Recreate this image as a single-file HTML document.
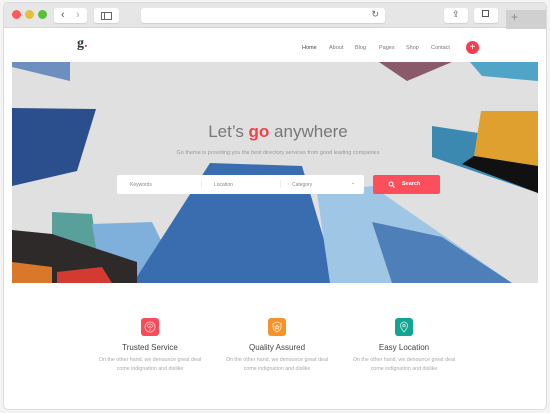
<!DOCTYPE html><html><head><style>
*{margin:0;padding:0;box-sizing:border-box}
body{width:550px;height:413px;background:#f3f3f3;font-family:"Liberation Sans",sans-serif;position:relative;overflow:hidden}
.win{position:absolute;left:3px;top:2px;width:544px;height:408px;background:#fff;border:1px solid #dcdcdc;border-radius:5px;overflow:hidden}
.bar{position:absolute;left:0;top:0;width:100%;height:25px;background:#e6e6e6;border-bottom:1px solid #d6d6d6}
.dot{position:absolute;top:7px;width:9px;height:9px;border-radius:50%}
.btn{position:absolute;top:5px;height:15px;background:#fff;border-radius:3px;box-shadow:0 1px 1px rgba(0,0,0,.1)}
.ab{position:absolute}
.nav span{position:absolute;top:42px;font-size:5.5px;color:#777}
.feat{position:absolute;top:315px;width:140px;text-align:center}
.ic{width:18px;height:18px;border-radius:3px;margin:0 auto;position:relative}
.ic svg{position:absolute;left:3px;top:3px}
.feat h4{font-weight:normal;font-size:8px;color:#444;margin-top:7px}
.feat p{font-size:5.3px;color:#aaa;line-height:8.5px;margin-top:4px}
</style></head><body>
<div class="win">
<div class="bar">
<div class="dot" style="left:8px;background:#fc5b57"></div>
<div class="dot" style="left:21px;background:#e5bf3c"></div>
<div class="dot" style="left:34px;background:#57c038"></div>
<div class="btn" style="left:50px;width:33px"><span class="ab" style="left:7px;top:1px;font-size:11px;color:#555">‹</span><span class="ab" style="left:22px;top:1px;font-size:11px;color:#aaa">›</span></div>
<div class="btn" style="left:90px;width:25px"><div class="ab" style="left:7px;top:4px;width:11px;height:8px;border:1px solid #666"></div><div class="ab" style="left:10px;top:4px;width:1px;height:8px;background:#666"></div></div>
<div class="btn" style="left:137px;width:244px"><span class="ab" style="right:6px;top:1px;font-size:9px;color:#666">↻</span></div>
<div class="btn" style="left:440px;width:24px"><span class="ab" style="left:8px;top:1px;font-size:9px;color:#555">⇪</span></div>
<div class="btn" style="left:470px;width:24px"><span class="ab" style="left:8px;top:2px;width:7px;height:7px;border:1px solid #555"></span></div>
<div class="ab" style="left:502px;top:7px;width:40px;height:19px;background:#d0d0d0;color:#888;font-size:12px;padding-left:5px">+</div>
</div>
<div class="ab" style="left:73px;top:33px;font-size:14px;font-weight:bold;color:#333;font-family:'Liberation Serif',serif">g<span style="color:#f0434c">.</span></div>
<div class="nav"><span style="left:298px;color:#444">Home</span><span style="left:325px">About</span><span style="left:351px">Blog</span><span style="left:375px">Pages</span><span style="left:402px">Shop</span><span style="left:427px">Contact</span></div>
<div class="ab" style="left:462px;top:38px;width:13px;height:13px;border-radius:50%;background:#fb3c4d;color:#fff;font-size:10px;text-align:center;line-height:13px">+</div>
<svg class="ab" style="left:8px;top:59px" width="526" height="221" viewBox="0 0 526 221">
<rect width="526" height="221" fill="#e0e0e0"/>
<polygon points="0,0 58,0 58,19 0,5" fill="#6d8fc0"/>
<polygon points="367,0 440,0 395,19" fill="#8a5a6a"/>
<polygon points="458,0 526,0 526,19 470,14" fill="#4fa4c8"/>
<polygon points="0,46 84,47 65,109 0,124" fill="#2b4f8c"/>
<polygon points="420,64 526,80 526,131 420,95" fill="#3b88b0"/>
<polygon points="469,49 526,49 526,104 462,94" fill="#e0a030"/>
<polygon points="462,94 526,104 526,131 450,102" fill="#111"/>
<polygon points="40,150 80,152 90,221 40,221" fill="#5aa09a"/>
<polygon points="80,162 140,160 170,221 90,221" fill="#7fb0dc"/>
<polygon points="198,101 290,104 325,221 121,221" fill="#3a6db0"/>
<polygon points="305,131 360,124 500,221 318,221" fill="#9fc6e4"/>
<polygon points="360,160 430,175 500,221 380,221" fill="#4f7fb8"/>
<polygon points="0,168 40,172 125,200 125,221 0,221" fill="#2e2a2a"/>
<polygon points="0,200 40,205 40,221 0,221" fill="#d9782a"/>
<polygon points="45,210 90,205 100,221 45,221" fill="#d23a32"/>
</svg>
<div class="ab" style="left:0;top:119px;width:548px;text-align:center;font-size:17px;color:#777">Let’s <b style="color:#f0434c">go</b> anywhere</div>
<div class="ab" style="left:0;top:147px;width:548px;text-align:center;font-size:5.5px;color:#999">Go theme is providing you the best directory services from good leading companies</div>
<div class="ab" style="left:113px;top:172px;width:247px;height:19px;background:#fff;border-radius:2px;font-size:5px;color:#888">
<span class="ab" style="left:13px;top:7px">Keywords</span><span class="ab" style="left:84px;top:5px;height:8px;border-left:1px solid #eee"></span>
<span class="ab" style="left:97px;top:7px">Location</span><span class="ab" style="left:163px;top:5px;height:8px;border-left:1px solid #eee"></span>
<span class="ab" style="left:175px;top:7px">Category</span><span class="ab" style="left:234px;top:5px">⌄</span></div>
<div class="ab" style="left:369px;top:172px;width:67px;height:19px;background:#fb4f5c;border-radius:2px;color:#fff;font-size:5.5px;font-weight:bold;line-height:19px;padding-left:29px"><svg class="ab" style="left:15px;top:6px" width="7" height="7" viewBox="0 0 7 7"><circle cx="3" cy="3" r="2" fill="none" stroke="#fff" stroke-width="1"/><path d="M4.5 4.5L6.5 6.5" stroke="#fff" stroke-width="1"/></svg>Search</div>
<div class="feat" style="left:76px"><div class="ic" style="background:#fb4a58"><svg width="12" height="12" viewBox="0 0 12 12" fill="none" stroke="#fff" stroke-opacity=".7" stroke-width=".8"><circle cx="6" cy="6" r="5"/><path d="M3 6a3 3 0 0 1 6 0M4.5 7a1.5 1.5 0 0 1 3 0M6 6v4"/></svg></div><h4>Trusted Service</h4><p>On the other hand, we denounce great deal<br>come indignation and dislike</p></div>
<div class="feat" style="left:203px"><div class="ic" style="background:#f7922a"><svg width="12" height="12" viewBox="0 0 12 12" fill="none" stroke="#fff" stroke-opacity=".8" stroke-width=".8"><path d="M6 1L10 2.5V6c0 2.5-2 4-4 5-2-1-4-2.5-4-5V2.5z"/><path d="M6 4l.7 1.4 1.5.2-1.1 1 .3 1.5L6 7.4l-1.4.7.3-1.5-1.1-1 1.5-.2z"/></svg></div><h4>Quality Assured</h4><p>On the other hand, we denounce great deal<br>come indignation and dislike</p></div>
<div class="feat" style="left:330px"><div class="ic" style="background:#13a592"><svg width="12" height="12" viewBox="0 0 12 12" fill="none" stroke="#fff" stroke-opacity=".8" stroke-width=".8"><path d="M6 11C3.5 8 2.5 6.5 2.5 4.5a3.5 3.5 0 0 1 7 0C9.5 6.5 8.5 8 6 11z"/><circle cx="6" cy="4.5" r="1.2"/></svg></div><h4>Easy Location</h4><p>On the other hand, we denounce great deal<br>come indignation and dislike</p></div>
</div>
</body></html>
